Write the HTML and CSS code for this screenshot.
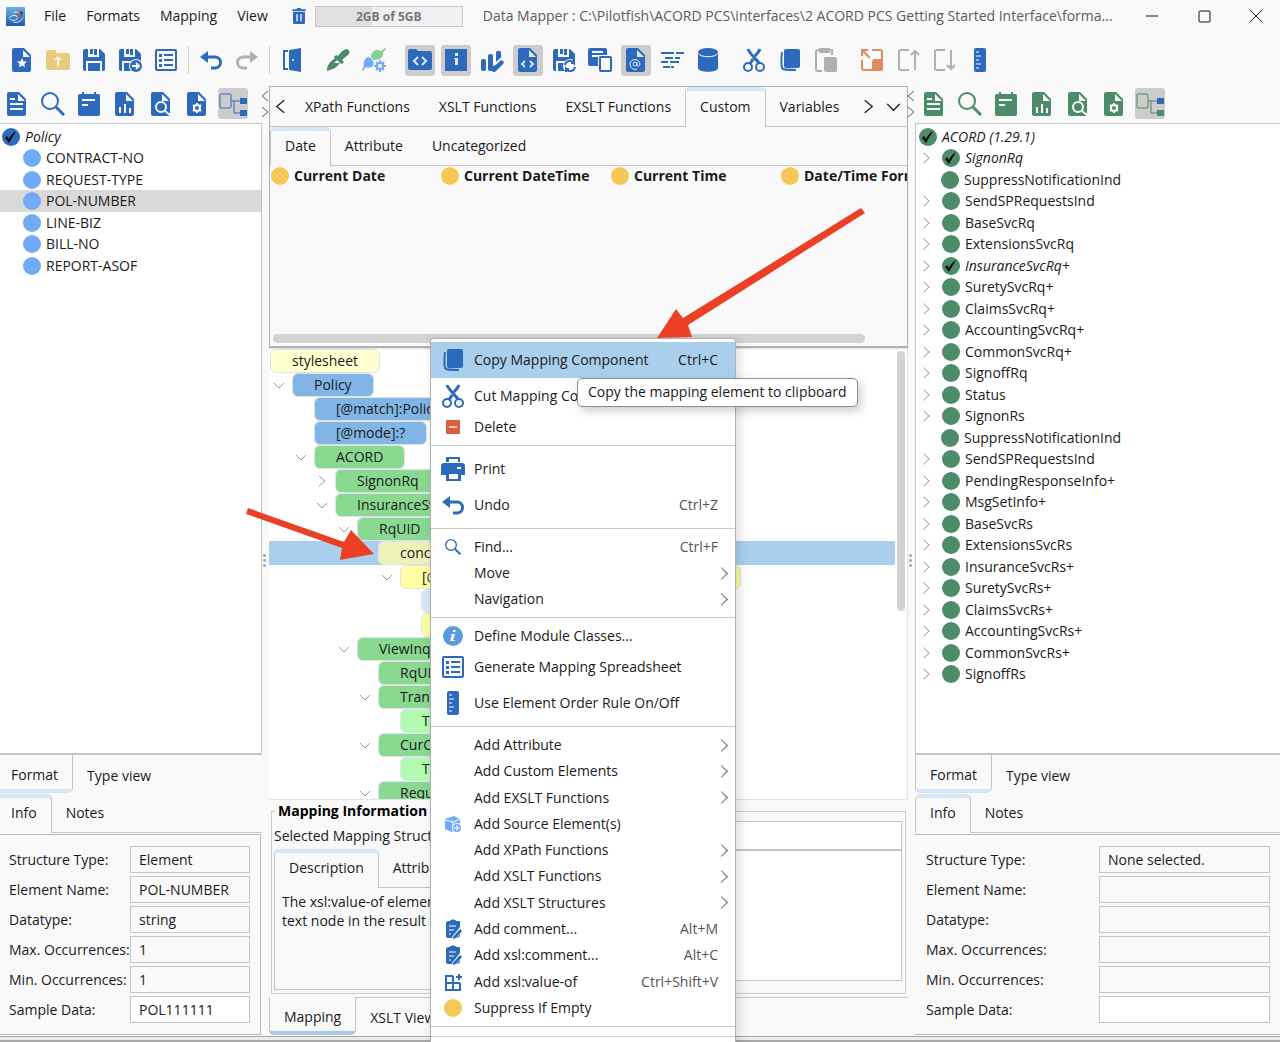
FILE: index.html
```html
<!DOCTYPE html>
<html lang="en">

<head>
  <meta charset="UTF-8">
  <meta name="viewport" content="width=device-width, initial-scale=1.0">
  <title>Data Mapper</title>
  <link rel="stylesheet" href="styles.css">
</head>
<body>
  <!-- icon set -->
  <svg class="sprite" aria-hidden="true">
    <symbol id="doc" viewBox="0 0 24 24"><path d="M2 2a2 2 0 0 1 2-2h10l7 7v15a2 2 0 0 1-2 2H4a2 2 0 0 1-2-2z"/><path class="hole" d="M13 2v7h7z"/></symbol>
    <symbol id="doc-star" viewBox="0 0 24 24"><use href="#doc"/><path class="hole" d="m12 10 1.4 3.300 3.600.3-2.700 2.400.8 3.500-3.100-1.900-3.100 1.900.8-3.500L7 13.600l3.600-.3z"/></symbol>
    <symbol id="folder-up" viewBox="0 0 24 24"><path d="M0 4a2 2 0 0 1 2-2h7l2 3h11a2 2 0 0 1 2 2v13a2 2 0 0 1-2 2H2a2 2 0 0 1-2-2z"/><path class="hole" d="M11 18v-6H8l4-4 4 4h-3v6z"/></symbol>
    <symbol id="save" viewBox="0 0 24 24"><path d="M1 3a2 2 0 0 1 2-2h15l5 5v15a2 2 0 0 1-2 2H3a2 2 0 0 1-2-2z"/><path class="hole" d="M6 1h11v8H6z"/><path d="M8 1h3v5H8zm4 0h3v6h-3z"/><path class="hole" d="M4 13h16v10h-2v-8H6v8H4z"/></symbol>
    <symbol id="save-as" viewBox="0 0 24 24"><use href="#save"/><circle class="hole" cx="18" cy="18" r="7"/><circle cx="18" cy="18" r="6"/><path class="cut" d="M14 18h7m-3-3 3 3-3 3"/></symbol>
    <symbol id="save-sync" viewBox="0 0 24 24"><use href="#save"/><circle class="hole" cx="18" cy="18" r="7"/><path class="line" d="M13 17a5 5 0 0 1 9-2v-3m0 3h-3M23 19a5 5 0 0 1-9 2v3m0-3h3"/></symbol>
    <symbol id="list" viewBox="0 0 24 24"><rect class="line" x="2" y="2" width="20" height="20" rx="1"/><path d="M5 6h3v3H5zm5 0h9v2h-9zM5 11h3v3H5zm5 0h9v2h-9zM5 16h3v3H5zm5 0h9v2h-9z"/></symbol>
    <symbol id="undo" viewBox="0 0 24 24"><path d="M1 9 9 3v12z"/><path class="line thick" d="M6 9h10a5 5 0 0 1 0 11h-4"/></symbol>
    <symbol id="redo" viewBox="0 0 24 24"><path d="m23 9-8-6v12z"/><path class="line thick" d="M18 9H8a5 5 0 0 0 0 11h4"/></symbol>
    <symbol id="door" viewBox="0 0 24 24"><path d="m9 2 12-2v24L9 22z"/><path class="line" d="M8 3H4v18h4"/><circle class="hole" cx="13" cy="12" r="1"/></symbol>
    <symbol id="dropper" viewBox="0 0 24 24"><path d="M1 23c0-6 2-8 8-13l-1-1 2-2 2 1c3-4 5-6 8-7 3 0 4 3 3 5l-7 6 2 2-2 2-2-1c-4 5-6 6-13 8z"/><path class="hole" d="m6 17 5-5 3 3h-6z"/></symbol>
    <symbol id="leafgear" viewBox="0 0 24 24"><path class="leaf" d="M9 8c1-6 7-7 10-5l4-3 1 1-3 4c1 4-3 7-8 7-3 0-4-1-4-4z"/><path class="sky" d="M2 18c-1-4 1-9 5-9 3 2 6 5 4 9-2 2-5 2-7 1l-3 4-1-1z"/><circle class="hole" cx="18" cy="18" r="6"/><path class="skyline" d="M18 12v12m-6-6h12m-10-4 8 8m0-8-8 8"/><circle class="sky" cx="18" cy="18" r="4"/><circle class="hole" cx="18" cy="18" r="2"/></symbol>
    <symbol id="folder-code" viewBox="0 0 24 24"><path d="M0 3a2 2 0 0 1 2-2h6l2 2h12a2 2 0 0 1 2 2v15a2 2 0 0 1-2 2H2a2 2 0 0 1-2-2z"/><path class="cut" d="m10 9-4 4 4 4m4-8 4 4-4 4"/></symbol>
    <symbol id="info" viewBox="0 0 24 24"><path d="M1 1h22v22H1z"/><path class="hole" d="M11 5h3v3h-3zm-1 5h4v7h-3v-6h-1z"/></symbol>
    <symbol id="bars" viewBox="0 0 24 24"><rect x="1" y="11" width="5" height="12" rx="2"/><rect x="8" y="6" width="5" height="17" rx="2"/><path d="M16 4a3 3 0 0 1 5 0v8l2 1a2 2 0 0 1 0 3l-7 7a2 2 0 0 1-4-3l4-6z"/><path class="cut" d="m14 17 8-7"/></symbol>
    <symbol id="doc-code" viewBox="0 0 24 24"><use href="#doc"/><path class="cut" d="m9 13-3 3 3 3m5-6 3 3-3 3"/></symbol>
    <symbol id="pages" viewBox="0 0 24 24"><rect x="0" y="0" width="19" height="18" rx="2"/><path class="cut" d="M4 4h11M4 8h9"/><path class="hole" d="M10 7h14v17H10z"/><rect class="line" x="12" y="9" width="11" height="14" rx="1"/></symbol>
    <symbol id="doc-at" viewBox="0 0 24 24"><use href="#doc"/><circle class="cut thin" cx="11" cy="16" r="2"/><path class="cut thin" d="M13 14v3c0 2 3 1 3-1a5 5 0 1 0-3 5"/></symbol>
    <symbol id="lines" viewBox="0 0 24 24"><path class="line" d="M1 5h13m2 0h8M5 10h8m2 0h5M1 14h7m2 0h9M3 19h7m1 0h3"/></symbol>
    <symbol id="db" viewBox="0 0 24 24"><path d="M2 4v16c0 5 20 5 20 0V4z"/><ellipse cx="12" cy="4" rx="10" ry="4"/><path class="cut thin" d="M2 5c2 5 18 5 20 0"/></symbol>
    <symbol id="cut" viewBox="0 0 24 24"><circle class="line" cx="6" cy="19" r="4"/><circle class="line" cx="18" cy="19" r="4"/><path class="line thick" d="M6 1c1 4 8 10 11 14M18 1c-1 3-3 5-5 7m-2 3-3 5"/></symbol>
    <symbol id="copy" viewBox="0 0 24 24"><rect x="6" y="1" width="16" height="19" rx="2"/><path class="line" d="M4 4c-1 9-1 12 0 16 1 2 4 2 14 2"/></symbol>
    <symbol id="paste" viewBox="0 0 24 24"><path class="line" d="M8 23H4a2 2 0 0 1-2-2V4c0-1 1-2 2-2h14v5"/><rect class="line" x="6" y="1" width="9" height="3"/><rect x="10" y="9" width="13" height="15" rx="2"/></symbol>
    <symbol id="expand" viewBox="0 0 24 24"><path class="line" d="M2 12v8a2 2 0 0 0 2 2h8M12 2h8a2 2 0 0 1 2 2v7M2 8V2h6M2 2l8 8"/><path d="M12 14c0-2 1-3 3-3h8v10c0 1-1 2-2 2h-9z"/></symbol>
    <symbol id="box-up" viewBox="0 0 24 24"><path class="line" d="M13 2H5a2 2 0 0 0-2 2v16c0 1 1 2 2 2h8M19 22V3m-4 4 4-4 4 4"/></symbol>
    <symbol id="box-down" viewBox="0 0 24 24"><path class="line" d="M13 2H5a2 2 0 0 0-2 2v16c0 1 1 2 2 2h8M19 2v19m-4-4 4 4 4-4"/></symbol>
    <symbol id="ruler" viewBox="0 0 24 24"><rect x="6" y="0" width="12" height="24" rx="2"/><path class="cut thin" d="M8 4h3m-3 4h5m-5 4h3m-3 4h5m-5 4h3"/></symbol>
    <symbol id="doc-text" viewBox="0 0 24 24"><use href="#doc"/><path class="cut" d="M5 7h5m-5 5h13M5 17h13"/></symbol>
    <symbol id="search" viewBox="0 0 24 24"><circle class="line" cx="9" cy="9" r="8"/><path class="line thick" d="m15 15 8 8"/></symbol>
    <symbol id="note" viewBox="0 0 24 24"><path d="M1 4c0-2 1-2 4-2V0h2v2h10V0h2v2c3 0 4 0 4 2v18a2 2 0 0 1-2 2H3a2 2 0 0 1-2-2z"/><path class="cut" d="M5 8h13M5 13h6"/></symbol>
    <symbol id="doc-chart" viewBox="0 0 24 24"><use href="#doc"/><path class="cut" d="M7 15v6m5-9v9m5-5v5"/></symbol>
    <symbol id="doc-find" viewBox="0 0 24 24"><use href="#doc"/><circle class="cut" cx="12" cy="15" r="5"/><path class="cut" d="m16 19 5 4"/></symbol>
    <symbol id="doc-gear" viewBox="0 0 24 24"><use href="#doc"/><path class="cut" d="M12 11v10m-4-8 8 6m0-6-8 6"/><circle class="hole" cx="12" cy="16" r="4"/><circle cx="12" cy="16" r="2"/></symbol>
    <symbol id="nodes" viewBox="0 0 30 30"><rect class="line thin" x="2" y="5" width="11" height="14" rx="1"/><path class="line thin" d="M13 12h9m-6 0v12h6"/><path class="node-a" d="M22 9h7v6h-7z"/><path d="M22 21h7v6h-7z"/></symbol>
    <symbol id="trash" viewBox="0 0 24 24"><path d="M2 2h6l2-2h4l2 2h6v3H2zm1 4h18v16a2 2 0 0 1-2 2H5a2 2 0 0 1-2-2z"/><path class="cut" d="M9 9v11m6-11v11"/></symbol>
    <symbol id="delete" viewBox="0 0 24 24"><rect x="5" y="5" width="14" height="14" rx="1"/><path d="M8 11h8v2H8z" fill="#f0c9a0"/></symbol>
    <symbol id="print" viewBox="0 0 24 24"><path d="M5 0h14v5H5zM3 6h18c2 0 3 1 3 3v9h-4v6H5v-6H0V9c0-2 1-3 3-3z"/><path class="hole" d="M8 2h9v3H8zM8 17h9v5H8zM16 10h4v2h-4z"/></symbol>
    <symbol id="info-round" viewBox="0 0 24 24"><circle cx="12" cy="12" r="10"/><path class="hole" d="M12 6h3l-1 2h-2zm-2 4h4l-2 6h2v1H9l2-6h-1z"/></symbol>
    <symbol id="cube" viewBox="0 0 24 24"><path d="m4 7 9-3 6 3v10l-8 3-7-3z"/><path class="cut thin" d="m4 8 8 2 7-3m-7 3v9"/><circle class="hole" cx="16" cy="16" r="5"/><circle cx="16" cy="16" r="4"/><path class="cut thin" d="M13 16h6m-3-3v6"/></symbol>
    <symbol id="clip" viewBox="0 0 24 24"><path d="M5 6c0-1 1-2 3-2h1c0-2 6-2 6 0h3c1 0 1 1 1 2v13l-2 2H7c-1 0-2-1-2-2z"/><path class="cut thin" d="M8 9h7m-7 4h5m-5 4h2"/><path class="hole" d="m11 20 8-10 3 3-7 9h-4z"/><path d="m12 20 7-8 2 2-6 7-3 1z"/></symbol>
    <symbol id="grid-add" viewBox="0 0 24 24"><path class="line" d="M12 6H5v14h14v-7M5 13h14m-7-7v14M18 4v6m-3-3h6"/></symbol>
    <symbol id="dot" viewBox="0 0 24 24"><circle cx="12" cy="12" r="9"/></symbol>
    <symbol id="dot-check" viewBox="0 0 24 24"><circle cx="12" cy="12" r="9"/><path d="m6 13 2-2 2 3c2-4 4-6 7-8-2 4-5 8-7 12z" fill="#080808"/></symbol>
    <symbol id="right" viewBox="0 0 12 12"><path class="arrow" d="m3 1 6 5-6 5"/></symbol>
    <symbol id="left" viewBox="0 0 12 12"><path class="arrow" d="M9 1 3 6l6 5"/></symbol>
    <symbol id="down" viewBox="0 0 12 12"><path class="arrow" d="m1 4 5 5 5-5"/></symbol>
  </svg>

  <!-- title bar -->
  <header class="titlebar">
    <svg class="app-icon" viewBox="0 0 20 20" aria-hidden="true">
      <defs><linearGradient id="app" x2="0" y2="1"><stop offset="0" stop-color="#6fb0e3"/><stop offset="1" stop-color="#2058a8"/></linearGradient></defs>
      <rect width="20" height="20" rx="1" fill="url(#app)"/>
      <path d="M3 12c3-4 8-4 9-1s-5 4-8 2m4 3c5 1 9-2 10-5M8 6c2-1 4-1 5 0" fill="none" stroke="#e4f1fb"/>
      <path d="M13 6v5m0-8v1" stroke="#e2532d" stroke-width="2"/><path d="M16 4v6m-1-4h3" stroke="#153a6b"/>
    </svg>
    <nav class="menubar">
      <button>File</button>
      <button>Formats</button>
      <button>Mapping</button>
      <button>View</button>
    </nav>
    <button class="trash blue" aria-label="Free memory"><svg><use href="#trash"/></svg></button>
    <div class="memory">2GB of 5GB</div>
    <div class="title">Data Mapper : C:\Pilotfish\ACORD PCS\interfaces\2 ACORD PCS Getting Started Interface\forma...</div>
    <div class="window-buttons">
      <button aria-label="Minimize"><svg viewBox="0 0 14 14"><path d="M1 7h12"/></svg></button>
      <button aria-label="Maximize"><svg viewBox="0 0 14 14"><rect x="2" y="2" width="11" height="11" rx="1"/></svg></button>
      <button aria-label="Close"><svg viewBox="0 0 14 14"><path d="m1 1 12 12M13 1 1 13"/></svg></button>
    </div>
  </header>

  <!-- main toolbar -->
  <div class="toolbar blue">
    <div class="group">
      <button aria-label="New"><svg><use href="#doc-star"/></svg></button>
      <button class="sand" aria-label="Open"><svg><use href="#folder-up"/></svg></button>
      <button aria-label="Save"><svg><use href="#save"/></svg></button>
      <button aria-label="Save as"><svg><use href="#save-as"/></svg></button>
      <button aria-label="Spreadsheet"><svg><use href="#list"/></svg></button>
    </div>
    <div class="separator"></div>
    <div class="group">
      <button aria-label="Undo"><svg><use href="#undo"/></svg></button>
      <button class="gray" aria-label="Redo"><svg><use href="#redo"/></svg></button>
    </div>
    <div class="separator"></div>
    <div class="group">
      <button aria-label="Exit"><svg><use href="#door"/></svg></button>
    </div>
    <div class="group">
      <button class="green" aria-label="Pick"><svg><use href="#dropper"/></svg></button>
      <button aria-label="Auto map"><svg><use href="#leafgear"/></svg></button>
    </div>
    <div class="group">
      <button class="on" aria-label="Show code"><svg><use href="#folder-code"/></svg></button>
      <button class="on" aria-label="Show info"><svg><use href="#info"/></svg></button>
      <button aria-label="Statistics"><svg><use href="#bars"/></svg></button>
      <button class="on" aria-label="Source view"><svg><use href="#doc-code"/></svg></button>
      <button aria-label="Save and reload"><svg><use href="#save-sync"/></svg></button>
      <button aria-label="Templates"><svg><use href="#pages"/></svg></button>
      <button class="on" aria-label="Attributes"><svg><use href="#doc-at"/></svg></button>
      <button aria-label="Format text"><svg><use href="#lines"/></svg></button>
      <button aria-label="Database"><svg><use href="#db"/></svg></button>
    </div>
    <div class="group">
      <button aria-label="Cut"><svg><use href="#cut"/></svg></button>
      <button aria-label="Copy"><svg><use href="#copy"/></svg></button>
      <button class="gray" aria-label="Paste"><svg><use href="#paste"/></svg></button>
    </div>
    <div class="group">
      <button class="orange" aria-label="Expand"><svg><use href="#expand"/></svg></button>
      <button class="gray" aria-label="Move up"><svg><use href="#box-up"/></svg></button>
      <button class="gray" aria-label="Move down"><svg><use href="#box-down"/></svg></button>
      <button aria-label="Element order"><svg><use href="#ruler"/></svg></button>
    </div>
  </div>

  <main class="workspace">
    <!-- source format -->
    <section class="side source">
      <div class="side-toolbar blue">
        <button aria-label="Details"><svg><use href="#doc-text"/></svg></button>
        <button aria-label="Search"><svg><use href="#search"/></svg></button>
        <button aria-label="Notes"><svg><use href="#note"/></svg></button>
        <button aria-label="Report"><svg><use href="#doc-chart"/></svg></button>
        <button aria-label="Preview"><svg><use href="#doc-find"/></svg></button>
        <button aria-label="Settings"><svg><use href="#doc-gear"/></svg></button>
        <button class="on" aria-label="Tree"><svg class="large"><use href="#nodes"/></svg></button>
      </div>
      <ul class="tree">
        <li class="root mapped"><svg><use href="#dot-check"/></svg>Policy</li>
        <li><svg><use href="#dot"/></svg>CONTRACT-NO</li>
        <li><svg><use href="#dot"/></svg>REQUEST-TYPE</li>
        <li class="selected"><svg><use href="#dot"/></svg>POL-NUMBER</li>
        <li><svg><use href="#dot"/></svg>LINE-BIZ</li>
        <li><svg><use href="#dot"/></svg>BILL-NO</li>
        <li><svg><use href="#dot"/></svg>REPORT-ASOF</li>
      </ul>
      <div class="tabs bottom"><button class="active">Format</button><button>Type view</button></div>
      <div class="tabs"><button class="active">Info</button><button>Notes</button></div>
      <form class="info">
        <label for="s-type">Structure Type:</label><input id="s-type" value="Element" readonly>
        <label for="s-name">Element Name:</label><input id="s-name" value="POL-NUMBER" readonly>
        <label for="s-data">Datatype:</label><input id="s-data" value="string" readonly>
        <label for="s-max">Max. Occurrences:</label><input id="s-max" value="1" readonly>
        <label for="s-min">Min. Occurrences:</label><input id="s-min" value="1" readonly>
        <label for="s-sample">Sample Data:</label><input id="s-sample" value="POL111111">
      </form>
    </section>

    <div class="splitter"><svg><use href="#left"/></svg><svg><use href="#right"/></svg><i></i></div>

    <!-- mapping -->
    <section class="center">
      <div class="functions">
        <div class="tabs scrolling">
          <button class="scroll" aria-label="Previous tabs"><svg><use href="#left"/></svg></button>
          <button>XPath Functions</button><button>XSLT Functions</button><button>EXSLT Functions</button><button class="active">Custom</button><button>Variables</button>
          <span class="spacer"></span>
          <button class="scroll" aria-label="Next tabs"><svg><use href="#right"/></svg></button>
          <button class="scroll" aria-label="All tabs"><svg><use href="#down"/></svg></button>
        </div>
        <div class="tabs second"><button class="active">Date</button><button>Attribute</button><button>Uncategorized</button></div>
        <div class="function-list">
          <div><svg><use href="#dot"/></svg>Current Date</div>
          <div><svg><use href="#dot"/></svg>Current DateTime</div>
          <div><svg><use href="#dot"/></svg>Current Time</div>
          <div><svg><use href="#dot"/></svg>Date/Time Format</div>
        </div>
        <div class="hscroll"></div>
      </div>

      <div class="mapping">
        <ul class="mapping-tree">
          <li class="d0"><span class="pill cream">stylesheet</span></li>
          <li class="d1"><svg><use href="#down"/></svg><span class="pill azure">Policy</span></li>
          <li class="d2"><span class="pill azure">[@match]:Policy</span></li>
          <li class="d2"><span class="pill azure">[@mode]:?</span></li>
          <li class="d2"><svg><use href="#down"/></svg><span class="pill leafy">ACORD</span></li>
          <li class="d3"><svg><use href="#right"/></svg><span class="pill leafy">SignonRq</span></li>
          <li class="d3"><svg><use href="#down"/></svg><span class="pill leafy">InsuranceSvcRq</span></li>
          <li class="d4"><svg><use href="#down"/></svg><span class="pill leafy">RqUID</span></li>
          <li class="d5 selected"><span class="pill khaki">concat</span></li>
          <li class="d6"><svg><use href="#down"/></svg><span class="pill yellow">[@select]:concat('POL-', /Policy/POL-NUMBER)</span></li>
          <li class="d7"><span class="pill pale">text</span></li>
          <li class="d7"><span class="pill yellow">value</span></li>
          <li class="d4"><svg><use href="#down"/></svg><span class="pill leafy">ViewInqRq</span></li>
          <li class="d5"><span class="pill leafy">RqUID</span></li>
          <li class="d5"><svg><use href="#down"/></svg><span class="pill leafy">TransactionDt</span></li>
          <li class="d6"><span class="pill mint">Text</span></li>
          <li class="d5"><svg><use href="#down"/></svg><span class="pill leafy">CurCd</span></li>
          <li class="d6"><span class="pill mint">Text</span></li>
          <li class="d5"><svg><use href="#down"/></svg><span class="pill leafy">RequestDt</span></li>
        </ul>
        <div class="vscroll"></div>
      </div>

      <fieldset class="details">
        <legend>Mapping Information</legend>
        <div class="details-left">
          <label for="structure">Selected Mapping Structure:</label>
          <div class="tabs"><button class="active">Description</button><button>Attributes</button></div>
          <p>The xsl:value-of element generates a<br>text node in the result tree.</p>
        </div>
        <div class="details-right">
          <input id="structure">
          <textarea aria-label="Value"></textarea>
        </div>
      </fieldset>
      <div class="tabs bottom"><button class="active">Mapping</button><button>XSLT View</button></div>
    </section>

    <div class="splitter"><svg><use href="#left"/></svg><svg><use href="#right"/></svg><i></i></div>

    <!-- target format -->
    <section class="side target">
      <div class="side-toolbar green">
        <button aria-label="Details"><svg><use href="#doc-text"/></svg></button>
        <button aria-label="Search"><svg><use href="#search"/></svg></button>
        <button aria-label="Notes"><svg><use href="#note"/></svg></button>
        <button aria-label="Report"><svg><use href="#doc-chart"/></svg></button>
        <button aria-label="Preview"><svg><use href="#doc-find"/></svg></button>
        <button aria-label="Settings"><svg><use href="#doc-gear"/></svg></button>
        <button class="on" aria-label="Tree"><svg class="large"><use href="#nodes"/></svg></button>
      </div>
      <ul class="tree">
        <li class="root mapped"><svg><use href="#dot-check"/></svg>ACORD (1.29.1)</li>
        <li class="branch mapped"><svg><use href="#dot-check"/></svg>SignonRq</li>
        <li><svg><use href="#dot"/></svg>SuppressNotificationInd</li>
        <li class="branch"><svg><use href="#dot"/></svg>SendSPRequestsInd</li>
        <li class="branch"><svg><use href="#dot"/></svg>BaseSvcRq</li>
        <li class="branch"><svg><use href="#dot"/></svg>ExtensionsSvcRq</li>
        <li class="branch mapped"><svg><use href="#dot-check"/></svg>InsuranceSvcRq+</li>
        <li class="branch"><svg><use href="#dot"/></svg>SuretySvcRq+</li>
        <li class="branch"><svg><use href="#dot"/></svg>ClaimsSvcRq+</li>
        <li class="branch"><svg><use href="#dot"/></svg>AccountingSvcRq+</li>
        <li class="branch"><svg><use href="#dot"/></svg>CommonSvcRq+</li>
        <li class="branch"><svg><use href="#dot"/></svg>SignoffRq</li>
        <li class="branch"><svg><use href="#dot"/></svg>Status</li>
        <li class="branch"><svg><use href="#dot"/></svg>SignonRs</li>
        <li><svg><use href="#dot"/></svg>SuppressNotificationInd</li>
        <li class="branch"><svg><use href="#dot"/></svg>SendSPRequestsInd</li>
        <li class="branch"><svg><use href="#dot"/></svg>PendingResponseInfo+</li>
        <li class="branch"><svg><use href="#dot"/></svg>MsgSetInfo+</li>
        <li class="branch"><svg><use href="#dot"/></svg>BaseSvcRs</li>
        <li class="branch"><svg><use href="#dot"/></svg>ExtensionsSvcRs</li>
        <li class="branch"><svg><use href="#dot"/></svg>InsuranceSvcRs+</li>
        <li class="branch"><svg><use href="#dot"/></svg>SuretySvcRs+</li>
        <li class="branch"><svg><use href="#dot"/></svg>ClaimsSvcRs+</li>
        <li class="branch"><svg><use href="#dot"/></svg>AccountingSvcRs+</li>
        <li class="branch"><svg><use href="#dot"/></svg>CommonSvcRs+</li>
        <li class="branch"><svg><use href="#dot"/></svg>SignoffRs</li>
      </ul>
      <div class="tabs bottom"><button class="active">Format</button><button>Type view</button></div>
      <div class="tabs"><button class="active">Info</button><button>Notes</button></div>
      <form class="info">
        <label for="t-type">Structure Type:</label><input id="t-type" value="None selected." readonly>
        <label for="t-name">Element Name:</label><input id="t-name" readonly>
        <label for="t-data">Datatype:</label><input id="t-data" readonly>
        <label for="t-max">Max. Occurrences:</label><input id="t-max" readonly>
        <label for="t-min">Min. Occurrences:</label><input id="t-min" readonly>
        <label for="t-sample">Sample Data:</label><input id="t-sample">
      </form>
    </section>
  </main>
  <footer class="window-edge"></footer>

  <!-- context menu -->
  <div class="menu" role="menu">
    <div class="menu-group">
      <button class="tall active" role="menuitem"><svg><use href="#copy"/></svg>Copy Mapping Component<kbd>Ctrl+C</kbd></button>
      <button class="tall" role="menuitem"><svg><use href="#cut"/></svg>Cut Mapping Component</button>
      <button role="menuitem"><svg class="red"><use href="#delete"/></svg>Delete</button>
    </div>
    <div class="menu-group">
      <button class="tall" role="menuitem"><svg><use href="#print"/></svg>Print</button>
      <button class="tall" role="menuitem"><svg><use href="#undo"/></svg>Undo<kbd>Ctrl+Z</kbd></button>
    </div>
    <div class="menu-group">
      <button role="menuitem"><svg class="small"><use href="#search"/></svg>Find...<kbd>Ctrl+F</kbd></button>
      <button class="more" role="menuitem">Move</button>
      <button class="more" role="menuitem">Navigation</button>
    </div>
    <div class="menu-group">
      <button role="menuitem"><svg class="bright"><use href="#info-round"/></svg>Define Module Classes...</button>
      <button class="tall" role="menuitem"><svg><use href="#list"/></svg>Generate Mapping Spreadsheet</button>
      <button class="tall" role="menuitem"><svg><use href="#ruler"/></svg>Use Element Order Rule On/Off</button>
    </div>
    <div class="menu-group last">
      <button class="more" role="menuitem">Add Attribute</button>
      <button class="more" role="menuitem">Add Custom Elements</button>
      <button class="more" role="menuitem">Add EXSLT Functions</button>
      <button role="menuitem"><svg class="sky"><use href="#cube"/></svg>Add Source Element(s)</button>
      <button class="more" role="menuitem">Add XPath Functions</button>
      <button class="more" role="menuitem">Add XSLT Functions</button>
      <button class="more" role="menuitem">Add XSLT Structures</button>
      <button role="menuitem"><svg><use href="#clip"/></svg>Add comment...<kbd>Alt+M</kbd></button>
      <button role="menuitem"><svg><use href="#clip"/></svg>Add xsl:comment...<kbd>Alt+C</kbd></button>
      <button role="menuitem"><svg><use href="#grid-add"/></svg>Add xsl:value-of<kbd>Ctrl+Shift+V</kbd></button>
      <button role="menuitem"><svg class="amber"><use href="#dot"/></svg>Suppress If Empty</button>
    </div>
    <div class="menu-end"></div>
  </div>
  <div class="tooltip" role="tooltip">Copy the mapping element to clipboard</div>

  <!-- pointer arrows -->
  <svg class="pointer first" viewBox="0 0 210 132" aria-hidden="true"><path d="m204 0 4 5L31 117l4 12L0 130l19-29 7 9z"/></svg>
  <svg class="pointer second" viewBox="0 0 128 54" aria-hidden="true"><path d="m2 0 96 34 7-12 23 24-34 6 2-12L0 6z"/></svg>
</body>

</html>
```

FILE: styles.css
```css
* {
  box-sizing: border-box;
}

body {
  margin: 0;
  min-height: 100vh;
  position: relative;
  display: flex;
  flex-direction: column;
  overflow: hidden;
  background: #f9f9f9;
  color: #1a1a1a;
  font-family: "Open Sans", "Noto Sans", sans-serif;
  font-size: 14px;
  line-height: 20px;
}

button,
input,
textarea {
  margin: 0;
  padding: 0;
  border: 0;
  background: none;
  color: inherit;
  font: inherit;
}

ul {
  list-style: none;
  margin: 0;
  padding: 0;
}

svg {
  flex: none;
  width: 24px;
  height: 24px;
  fill: currentColor;
}

/* icon parts */
.sprite {
  position: absolute;
  width: 0;
  height: 0;
}

.hole {
  fill: var(--hole, #f9f9f9);
}

.line {
  fill: none;
  stroke: currentColor;
  stroke-width: 2;
}

.line.thick {
  stroke-width: 3;
}

.cut {
  fill: none;
  stroke: var(--hole, #f9f9f9);
  stroke-width: 2;
}

.line.thin,
.cut.thin {
  stroke-width: 1;
}

.arrow {
  fill: none;
  stroke: currentColor;
}

.leaf {
  fill: #85d08f;
}

.skyline {
  stroke: #71aaf5;
  stroke-width: 2;
}

path.sky,
circle.sky {
  fill: #71aaf5;
}

.node-a {
  fill: #2d6abb;
}

.blue { color: #2d6abb; }
.green { color: #4c8c68; }
.sand { color: #e8cb7c; }
.gray { color: #b0b0b0; }
.orange { color: #e08a62; }

/* title bar */
.titlebar {
  display: flex;
  align-items: center;
  height: 32px;
  padding-left: 6px;
}

.app-icon {
  width: 19px;
  height: 19px;
}

.menubar {
  display: flex;
  gap: 20px;
  margin-left: 19px;
}

.trash {
  width: 16px;
  height: 18px;
  margin-left: 23px;
}

.trash svg {
  display: block;
  width: 16px;
  height: 18px;
}

.memory {
  width: 148px;
  height: 21px;
  margin-left: 8px;
  border: 1px solid #c8c8c8;
  background: linear-gradient(to right, #e0e0e0 56px, #eef0f3 56px);
  color: #777;
  font-size: 12px;
  font-weight: bold;
  text-align: center;
}

.title {
  flex: 1;
  min-width: 0;
  overflow: hidden;
  margin-left: 20px;
  color: #5c5c5c;
  white-space: nowrap;
}

.window-buttons {
  display: flex;
  gap: 38px;
  padding: 0 17px 0 20px;
}

.window-buttons svg {
  display: block;
  width: 14px;
  height: 14px;
  fill: none;
  stroke: #111;
}

/* toolbars */
.toolbar {
  display: flex;
  align-items: center;
  height: 54px;
  padding: 2px 0 0 4px;
}

.group {
  display: flex;
}

.group + .group {
  margin-left: 10px;
}

.separator {
  width: 1px;
  height: 28px;
  margin: 0 4px;
  background: #d0d0d0;
}

.group button,
.side-toolbar button {
  display: flex;
  justify-content: center;
  align-items: center;
  width: 30px;
  height: 31px;
  margin: 0 3px;
  border-radius: 3px;
}

.group .on,
.side-toolbar .on {
  --hole: #ccc;
  background: #ccc;
}

.group .on {
  --hole: #dce8f4;
}

.side-toolbar {
  display: flex;
  align-items: center;
  height: 37px;
  padding-bottom: 2px;
}

svg.large {
  width: 30px;
  height: 30px;
}

/* workspace */
.workspace {
  flex: 1;
  display: grid;
  grid-template-columns: 262fr 7px 639fr 7px 365fr;
}

.side,
.center {
  display: flex;
  flex-direction: column;
  min-width: 0;
}

.source .side-toolbar {
  margin-left: -1px;
}

.target .side-toolbar {
  padding-left: 1px;
}

.splitter {
  display: flex;
  flex-direction: column;
  align-items: center;
  gap: 4px;
  padding: 4px 2px 38px 0;
  color: #555;
}

.splitter svg {
  width: 12px;
  height: 12px;
}

/* drag handle */
.splitter i {
  margin-top: auto;
  margin-bottom: auto;
  width: 3px;
  height: 15px;
  background: radial-gradient(circle, #aaa 1px, transparent 2px) 0 0 / 3px 5px;
}

/* format trees */
.tree {
  flex: 1;
  padding-top: 2px;
  border: 1px solid #c4c4c4;
  border-width: 1px 1px 2px 0;
  background: #fff;
}

.target .tree {
  border-width: 1px 0 2px 1px;
}

.tree li {
  display: flex;
  align-items: center;
  gap: 2px;
  height: 21px;
  padding-left: 21px;
  white-space: nowrap;
}

.tree li:nth-child(even) {
  height: 22px;
}

.tree li.root {
  padding-left: 0;
}

.tree .mapped {
  font-style: italic;
}

.tree .selected {
  background: #d9d9d9;
}

.tree svg {
  margin-left: -1px;
}

.source .tree svg { color: #71aaf5; }
.source .root svg { color: #2d6abb; }
.target .tree svg { color: #4c8c68; }

.target .tree li {
  padding-left: 23px;
}

.target .tree li.root {
  padding-left: 1px;
}

.target .tree .branch::before {
  content: "";
  width: 7px;
  height: 7px;
  margin-left: -19px;
  margin-right: 10px;
  border: solid #aaa;
  border-width: 1px 1px 0 0;
  transform: rotate(45deg);
}

/* tabs */
.tabs {
  display: flex;
  height: 39px;
  padding-bottom: 1px;
  background: linear-gradient(#c4c4c4, #c4c4c4) bottom / 100% 1px no-repeat;
}

.tabs button {
  padding: 0 14px;
  border: 1px solid transparent;
  white-space: nowrap;
}

.tabs button + button {
  margin-left: -1px;
}

.tabs .active {
  margin-bottom: -1px;
  padding-bottom: 5px;
  border-color: #c4c4c4;
  border-top: 4px solid #d6e6f4;
  border-bottom: 0;
  border-radius: 5px 5px 0 0;
  background: #f9f9f9;
}

.tabs.bottom {
  padding: 0 0 1px;
  background: none;
}

.tabs.bottom button {
  padding-top: 3px;
}

.tabs.bottom .active {
  margin-bottom: 0;
  padding-top: 5px;
  padding-bottom: 0;
  border-top: 0;
  border-bottom: 4px solid #d6e6f4;
  border-radius: 0 0 5px 5px;
}

.tabs .scroll {
  width: 21px;
  padding: 0;
}

.tabs .scroll svg {
  display: block;
  width: 15px;
  height: 15px;
  margin: auto;
}

.tabs .scroll:last-child {
  margin-left: 4px;
}

.spacer {
  flex: 1;
}

.source .tabs {
  margin-left: -4px;
}

/* info forms */
.info {
  display: grid;
  grid-template-columns: 121px 1fr;
  align-items: center;
  gap: 3px 0;
  margin: 1px 1px 1px 0;
  padding: 11px 10px 11px 9px;
  border: 1px solid #b8b8b8;
  border-left: 0;
}

.target .info {
  grid-template-columns: 173px 1fr;
  margin-right: 0;
  padding-left: 11px;
  border-width: 1px 0 1px 1px;
}

.info label {
  white-space: nowrap;
}

.info input {
  width: 100%;
  min-width: 0;
  height: 27px;
  padding: 0 8px;
  border: 1px solid #c4c4c4;
  background: #fff;
}

.info input:read-only {
  background: #f9f9f9;
}

/* function palette */
.functions {
  display: flex;
  flex-direction: column;
  height: 262px;
  border: 1px solid #b0b0b0;
  border-bottom-width: 2px;
}

.tabs.scrolling {
  height: 40px;
  padding-right: 3px;
}

.function-list {
  display: grid;
  grid-template-columns: repeat(4, 170px);
  overflow: hidden;
  font-weight: bold;
}

.function-list div {
  display: flex;
  align-items: center;
  gap: 2px;
  margin-left: -2px;
  height: 20px;
  white-space: nowrap;
}

.function-list svg {
  color: #f5c754;
}

.hscroll {
  width: 93%;
  height: 9px;
  margin: auto 0 3px 3px;
  border-radius: 5px;
  background: #d3d3d3;
}

/* mapping tree */
.mapping {
  flex: 1 1 0;
  display: flex;
  justify-content: space-between;
  min-height: 0;
  overflow: hidden;
  border: 1px solid #e2e2e2;
  border-left: 0;
  background: #fff;
}

.mapping-tree {
  flex: 1;
  min-width: 0;
  height: 451px;
  overflow: hidden;
}

.mapping-tree li {
  display: flex;
  align-items: center;
  height: 24px;
}

.mapping-tree li > svg {
  width: 12px;
  height: 12px;
  margin: 0 7px 0 -19px;
  color: #999;
}

.mapping-tree .selected {
  background: #aacfec;
}

.d0 { padding-left: 1px; }
.d1 { padding-left: 23px; }
.d2 { padding-left: 45px; }
.d3 { padding-left: 66px; }
.d4 { padding-left: 88px; }
.d5 { padding-left: 109px; }
.d6 { padding-left: 131px; }
.d7 { padding-left: 152px; }

.pill {
  padding: 0 21px;
  border: 1px solid #dfe3e6;
  border-radius: 6px;
  line-height: 22px;
  white-space: nowrap;
}

.cream { background: #ffffcf; }
.azure { background: #80b5e6; }
.leafy { background: #89d991; }
.khaki { background: #ecf2b8; }
.yellow { background: #ffffa3; }
.pale { background: #d8e8f5; }
.mint { background: #b1fbb0; }

.vscroll {
  width: 8px;
  height: 260px;
  margin: 2px 2px 0;
  border-radius: 4px;
  background: #d3d3d3;
}

/* mapping details */
.details {
  display: grid;
  grid-template-columns: 1fr 1fr;
  grid-template-rows: 169px;
  min-width: 0;
  margin: 1px 2px 3px;
  padding: 0 3px 3px 2px;
  border: 1px solid #ccc;
}

.details legend {
  margin-left: 1px;
  padding: 0 3px;
  color: #000;
  font-weight: bold;
}

.details-left,
.details-right {
  display: flex;
  flex-direction: column;
  min-width: 0;
}

.details-left label {
  height: 28px;
  line-height: 30px;
}

.details-left p {
  flex: 1;
  margin: 0;
  padding: 4px 7px;
  border: 1px solid #c4c4c4;
  border-top: 0;
  line-height: 19px;
  white-space: nowrap;
  overflow: hidden;
}

.details-right {
  padding-bottom: 9px;
}

.details-right input {
  height: 30px;
  border: 1px solid #c4c4c4;
  border-bottom-width: 2px;
  background: #fff;
}

.details-right textarea {
  flex: 1;
  border: 1px solid #c4c4c4;
  border-top: 0;
  background: #fff;
  resize: none;
}

.center > .tabs.bottom {
  border-top: 1px solid #c4c4c4;
}

.center > .tabs.bottom .active {
  margin-top: -1px;
  border-bottom-color: #a9cbe9;
}

.window-edge {
  height: 6px;
  border: solid #a8a8a8;
  border-width: 1px 0 2px;
  background: #ececec;
}

/* context menu */
.menu {
  position: absolute;
  top: 338px;
  bottom: 0;
  left: 430px;
  display: flex;
  flex-direction: column;
  width: 306px;
  padding-top: 3px;
  border: 1px solid #b0b0b0;
  border-bottom: 0;
  border-radius: 4px 4px 0 0;
  background: #fff;
  box-shadow: 3px 3px 12px rgba(0, 0, 0, 0.15);
  --hole: #fff;
}

.menu-group {
  display: flex;
  flex-direction: column;
  padding-bottom: 5px;
  margin-bottom: 5px;
  border-bottom: 1px solid #c8c8c8;
}

.menu-group.last {
  flex: 1;
}

.menu-group button {
  display: flex;
  align-items: center;
  height: 26px;
  padding: 0 17px 0 43px;
  text-align: left;
  white-space: nowrap;
}

.menu-group .tall {
  height: 36px;
}

.menu-group.last button {
  flex: 1;
  height: auto;
}

.menu-group .active {
  background: #aacfec;
}

.menu button svg {
  margin: 0 9px 0 -33px;
  color: #2d6abb;
}

.menu button svg.small {
  width: 16px;
  margin: 0 13px 0 -29px;
}

.menu button svg.red { color: #e05c40; }
.menu button svg.bright { color: #5b9bdc; }
.menu button svg.sky { color: #71aaf5; }
.menu button svg.amber { color: #f5c754; }

kbd {
  margin-left: auto;
  color: #555;
  font-family: inherit;
}

.active kbd {
  color: inherit;
}

.menu .more::after {
  content: "";
  width: 8px;
  height: 8px;
  margin-left: auto;
  margin-right: -8px;
  border: solid #666;
  border-width: 1px 1px 0 0;
  transform: rotate(45deg);
}

.menu-end {
  height: 6px;
  margin-top: 4px;
  border-top: 1px solid #ccc;
}

.tooltip {
  position: absolute;
  top: 378px;
  left: 577px;
  padding: 3px 10px 4px;
  border: 1px solid #8c8c8c;
  border-radius: 5px;
  background: #fff;
  box-shadow: 3px 4px 10px rgba(0, 0, 0, 0.2);
  white-space: nowrap;
}

.pointer {
  position: absolute;
  fill: #eb4026;
}

.pointer.first {
  top: 208px;
  left: 657px;
  width: 210px;
  height: 132px;
}

.pointer.second {
  top: 508px;
  left: 246px;
  width: 128px;
  height: 54px;
}
```
